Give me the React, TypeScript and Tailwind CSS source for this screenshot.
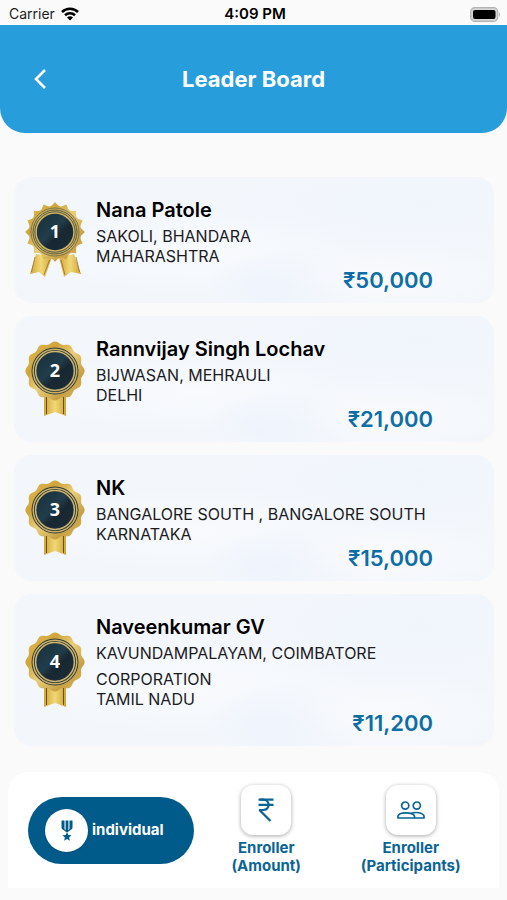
import React from 'react'

type Leader = {
  rank: number
  name: string
  area: string
  state: string
  amount: string
}

const leaders: Leader[] = [
  { rank: 1, name: 'Nana Patole', area: 'SAKOLI, BHANDARA', state: 'MAHARASHTRA', amount: '₹50,000' },
  { rank: 2, name: 'Rannvijay Singh Lochav', area: 'BIJWASAN, MEHRAULI', state: 'DELHI', amount: '₹21,000' },
  { rank: 3, name: 'NK', area: 'BANGALORE SOUTH , BANGALORE SOUTH', state: 'KARNATAKA', amount: '₹15,000' },
  { rank: 4, name: 'Naveenkumar GV', area: 'KAVUNDAMPALAYAM, COIMBATORE CORPORATION', state: 'TAMIL NADU', amount: '₹11,200' },
]

// outline of the rosette around (30, 31)
function rosette(points: number, base: number, depth: number, sharp: boolean) {
  const steps = 240
  const out: string[] = []
  for (let i = 0; i < steps; i++) {
    const a = (i / steps) * Math.PI * 2
    const wave = sharp ? 1 - 2 * Math.abs(Math.sin((a * points) / 2)) : Math.cos(a * points)
    const r = base + depth * wave
    out.push(`${(30 + r * Math.sin(a)).toFixed(2)},${(31 - r * Math.cos(a)).toFixed(2)}`)
  }
  return `M${out.join('L')}Z`
}

const starPath = rosette(16, 28, 1.9, true)
const wavyPath = rosette(12, 28.4, 1.2, false)

function Badge({ rank }: { rank: number }) {
  const first = rank === 1
  const gold = `gold-${rank}`
  const ribbon = `ribbon-${rank}`
  const face = `face-${rank}`
  return (
    <svg viewBox="0 0 60 78" className="h-[78px] w-[60px] shrink-0" role="img" aria-label={`Rank ${rank}`}>
      <defs>
        <linearGradient id={gold} x1="0" y1="0" x2="1" y2="1">
          <stop offset="0" stopColor="#e3bf58" />
          <stop offset="0.3" stopColor="#cfa43a" />
          <stop offset="0.5" stopColor="#e9cf7c" />
          <stop offset="0.75" stopColor="#c8a044" />
          <stop offset="1" stopColor="#dcbd62" />
        </linearGradient>
        <linearGradient id={ribbon} x1="0" y1="0" x2="1" y2="0">
          <stop offset="0" stopColor="#d0a53a" />
          <stop offset="0.5" stopColor="#f2d878" />
          <stop offset="1" stopColor="#cfa338" />
        </linearGradient>
        <linearGradient id={face} x1="0" y1="0" x2="1" y2="1">
          <stop offset="0" stopColor="#18303d" />
          <stop offset="0.45" stopColor="#213c4a" />
          <stop offset="0.6" stopColor="#182833" />
          <stop offset="1" stopColor="#1c2c38" />
        </linearGradient>
      </defs>
      {first ? (
        <>
          <path d="M11 53 L27 56 L20 76 L14 71 L5 73 Z" fill={`url(#${ribbon})`} />
          <path d="M49 53 L34 56 L39 76 L46 71 L56 73 Z" fill={`url(#${ribbon})`} />
          <path d="M10 56 L6.500 71 M24.500 59 L19 74 M51 56 L54.500 71 M36 59 L40 74" stroke="#8a6414" strokeWidth="0.7" />
        </>
      ) : (
        <>
          <path d="M19 54 H41 V76 L30 72 L19 76 Z" fill={`url(#${ribbon})`} />
          <path d="M21.500 56 V74 M38.500 56 V74" stroke="#6b4f16" strokeWidth="1" />
        </>
      )}
      <path d={first ? starPath : wavyPath} fill={`url(#${gold})`} />
      {first ? (
        <>
          <circle cx="30" cy="31" r="24" fill="#cdb264" stroke="#6f673c" strokeWidth="0.8" />
          <circle cx="30" cy="31" r="22" fill="none" stroke="#4c4f38" strokeWidth="0.9" />
          <circle cx="30" cy="31" r="20.200" fill="none" stroke="#4c4f38" strokeWidth="0.9" />
        </>
      ) : (
        <>
          <circle cx="30" cy="31" r="23.500" fill="#2e3a3c" />
          <circle cx="30" cy="31" r="21.800" fill="none" stroke="#c9b067" strokeWidth="1.500" />
          <circle cx="30" cy="31" r="19.400" fill="none" stroke="#cdb66f" strokeWidth="1.500" />
        </>
      )}
      <circle cx="30" cy="31" r="18.200" fill={`url(#${face})`} />
      <text x="30" y="37" textAnchor="middle" fontSize="18" fontWeight="700" fill="#fff" fontFamily="'Open Sans', sans-serif">
        {rank}
      </text>
    </svg>
  )
}

function LeaderCard({ leader }: { leader: Leader }) {
  return (
    <li className="flex items-center gap-[11px] rounded-[18px] bg-[#f3f7fc] bg-[radial-gradient(ellipse_at_76%_80%,#f9fafc_0%,transparent_26%),radial-gradient(ellipse_at_58%_85%,#ebf2fc_0%,transparent_22%),radial-gradient(ellipse_at_38%_60%,#f8fafd_0%,transparent_40%),radial-gradient(ellipse_at_85%_20%,#f0f5fc_0%,transparent_35%)] pl-[11px]">
      <Badge rank={leader.rank} />
      <div className="min-w-0 flex-1 pt-5 pb-[11px]">
        <h2 className="text-[20px] leading-[26px] font-semibold text-black">{leader.name}</h2>
        <p className="pr-[61px] text-[16px] leading-[26px] text-[#1c1c1e]">{leader.area}</p>
        <p className="-mt-[3px] text-[16px] leading-5 text-[#1c1c1e]">{leader.state}</p>
        <p className="mt-[2px] pr-[61px] text-right text-[22px] leading-6 font-semibold text-[#0d6ea6]">{leader.amount}</p>
      </div>
    </li>
  )
}

function StatusBar() {
  return (
    <div className="grid h-[25px] grid-cols-3 items-center pt-[3px] pr-[6px] pl-[9px] text-[14px] leading-5 text-[#1c1c1e]">
      <div className="flex items-center gap-[6px]">
        <span>Carrier</span>
        <svg viewBox="0 0 18 14" className="h-[14px] w-[18px]" fill="none" stroke="#000" strokeWidth="2.600" aria-hidden="true">
          <path d="M1 5 A11.500 11.500 0 0 1 17 5" />
          <path d="M4 8.300 A7.200 7.200 0 0 1 14 8.300" />
          <path d="M9 13.600 L6 10.600 A4.300 4.300 0 0 1 12 10.600 Z" fill="#000" stroke="none" />
        </svg>
      </div>
      <span className="text-center text-[15px] font-semibold text-black">4:09 PM</span>
      <svg viewBox="0 0 31 15" className="h-[15px] w-[31px] justify-self-end" aria-hidden="true">
        <rect x="0.700" y="0.700" width="27" height="13.600" rx="4" fill="#d5d5d5" stroke="#b4b4b4" strokeWidth="1.200" />
        <rect x="3" y="3" width="22.500" height="9" rx="2" fill="#000" />
        <path d="M29 5 Q31 7.500 29 10 Z" fill="#a9a9a9" />
      </svg>
    </div>
  )
}

function TabTile({ label, detail, children }: { label: string; detail: string; children: React.ReactNode }) {
  return (
    <button type="button" className="flex flex-1 flex-col items-center gap-1 text-[15px] leading-[18px] font-bold">
      <span className="flex h-[50px] w-[50px] items-center justify-center rounded-[12px] bg-white shadow-[0_1px_4px_rgba(0,0,0,0.35)]">
        {children}
      </span>
      <span className="flex flex-col items-center">
        <span>{label}</span>
        <span>{detail}</span>
      </span>
    </button>
  )
}

export default function App() {
  return (
    <div className="min-h-screen bg-[#fafafa] font-['Inter','Noto_Sans',sans-serif]">
      <StatusBar />

      {/* Header */}
      <header className="grid h-[108px] grid-cols-[80px_1fr_80px] items-center rounded-b-[25px] bg-[#289ddb] text-white">
        <button type="button" aria-label="Back" className="flex h-10 w-10 items-center justify-center justify-self-center">
          <svg viewBox="0 0 12 20" className="h-5 w-3" fill="none" stroke="currentColor" strokeWidth="2.600" aria-hidden="true">
            <path d="M11 1 L2 10 L11 19" />
          </svg>
        </button>
        <h1 className="text-center text-[22px] leading-7 font-bold">Leader Board</h1>
      </header>

      <ul className="mt-11 flex flex-col gap-[13px] pr-[13px] pl-[14px]">
        {leaders.map((leader) => (
          <LeaderCard key={leader.rank} leader={leader} />
        ))}
      </ul>

      {/* Bottom tabs */}
      <nav className="mx-2 mt-[26px] flex h-[116px] items-center rounded-t-[20px] bg-white pr-4 pl-5 text-[#0b6496]">
        <button type="button" className="flex h-[67px] w-[166px] shrink-0 items-center gap-1 rounded-full bg-[#005b8a] pl-[17px] text-[15px] leading-5 font-bold text-white">
          <span className="flex h-[43px] w-[43px] items-center justify-center rounded-full bg-white text-[#005b8a] shadow">
            <svg viewBox="0 0 12 21" className="h-[21px] w-3" aria-hidden="true">
              <path d="M0.500 0.500 H3.500 V10 L0.500 8 Z M8.500 0.500 H11.500 V8 L8.500 10 Z M4.600 0.500 H7.400 V11 L6 12 L4.600 11 Z" fill="currentColor" />
              <path d="M1 8.300 L6 11.800 L11 8.300" fill="none" stroke="currentColor" strokeWidth="1.200" />
              <path d="M6 12 L7.300 15 L10.600 15.300 L8.100 17.400 L8.900 20.700 L6 18.900 L3.100 20.700 L3.900 17.400 L1.400 15.300 L4.700 15 Z" fill="currentColor" />
            </svg>
          </span>
          individual
        </button>
        <TabTile label="Enroller" detail="(Amount)">
          <svg viewBox="0 0 16 24" className="h-6 w-4" fill="none" stroke="currentColor" strokeWidth="2.200" aria-hidden="true">
            <path d="M0.500 1.600 H15.500 M0.500 6.800 H15.500" />
            <path d="M2 1.600 H5 C12.500 1.600 12.500 12 5 12 H2 V12.600 L12.500 23" />
          </svg>
        </TabTile>
        <TabTile label="Enroller" detail="(Participants)">
          <svg viewBox="0 0 28 18" className="h-[18px] w-7" fill="none" stroke="currentColor" strokeWidth="1.700" strokeLinejoin="round" aria-hidden="true">
            <circle cx="8.200" cy="4.600" r="3.600" />
            <circle cx="19.800" cy="4.600" r="3.600" />
            <path d="M1 17 V15 C2 10.800 16 10.800 17.500 15 V17 Z" />
            <path d="M14 12.600 C18 10.600 26 11.500 27 15 V17 H17.500" />
          </svg>
        </TabTile>
      </nav>
    </div>
  )
}
